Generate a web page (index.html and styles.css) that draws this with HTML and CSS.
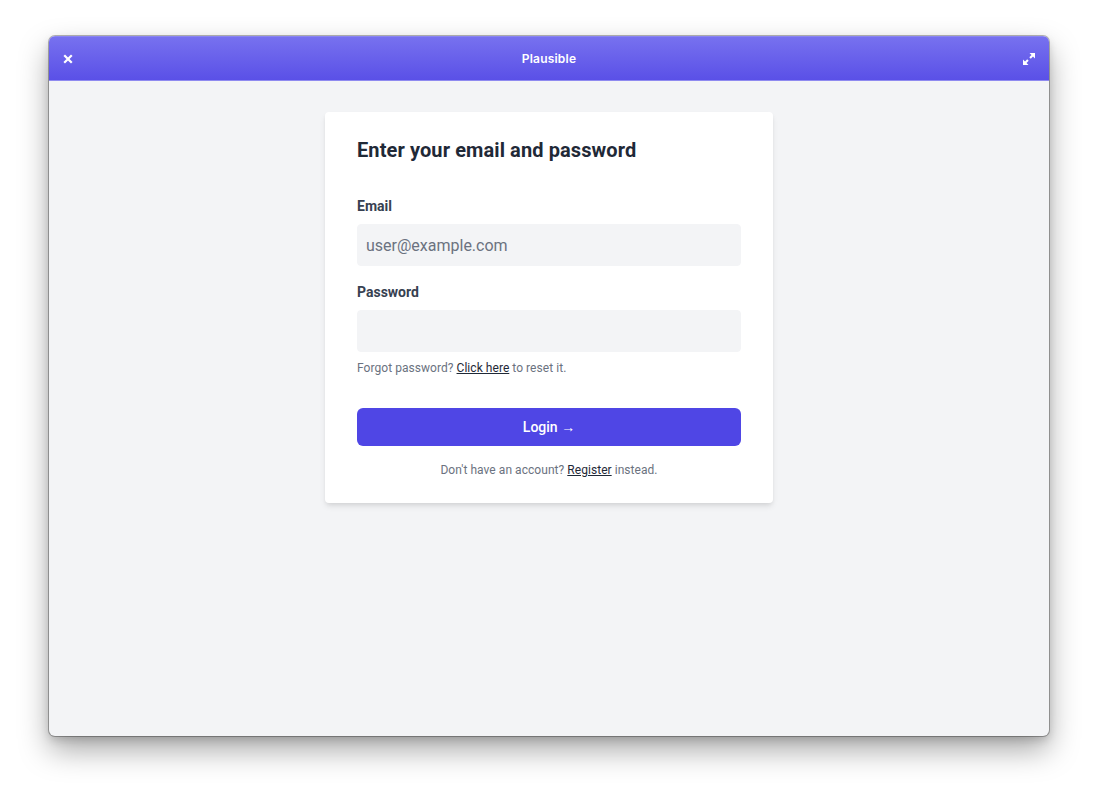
FILE: index.html
```html
<!DOCTYPE html>
<html lang="en">
<head>
<meta charset="utf-8">
<title>Plausible</title>
<link rel="stylesheet" href="styles.css">
</head>
<body>
<div class="desktop">
  <div class="window">
    <div class="titlebar">
      <button class="tb-btn close" aria-label="Close">
        <svg width="10" height="10" viewBox="0 0 10 10"><path d="M2 2 L8 8 M8 2 L2 8" stroke="#fff" stroke-width="2.2" stroke-linecap="square"/></svg>
      </button>
      <div class="tb-title">Plausible</div>
      <button class="tb-btn expand" aria-label="Maximize">
        <svg width="14" height="14" viewBox="0 0 14 14"><path d="M7.5 1 H13 V6.5 L11 4.5 L8.8 6.7 L7.3 5.2 L9.5 3 Z M1 7.5 V13 H6.5 L4.5 11 L6.7 8.8 L5.2 7.3 L3 9.5 Z" fill="#fff"/></svg>
      </button>
    </div>
    <div class="content">
      <form class="card">
        <h2 class="card-title">Enter your email and password</h2>
        <label class="label label-first" for="email">Email</label>
        <input class="input" id="email" type="email" placeholder="user@example.com">
        <label class="label" for="password">Password</label>
        <input class="input" id="password" type="password">
        <p class="hint">Forgot password? <a href="#">Click here</a> to reset it.</p>
        <button class="login" type="button">Login →</button>
        <p class="register">Don't have an account? <a href="#">Register</a> instead.</p>
      </form>
    </div>
  </div>
</div>
</body>
</html>
```

FILE: styles.css
```css
* { box-sizing: border-box; }
html, body { margin: 0; padding: 0; background: #ffffff; }
body { font-family: Roboto, "Liberation Sans", sans-serif; min-height: 100vh; }

.desktop {
  padding: 36px 0 62px 49px;
  min-height: 798px;
}

.window {
  width: 1000px;
  height: 700px;
  border-radius: 6px;
  overflow: hidden;
  display: flex;
  flex-direction: column;
  background: #f3f4f6;
  box-shadow: 0 0 0 1px rgba(0,0,0,0.28), 0 14px 30px rgba(0,0,0,0.34), 0 4px 8px rgba(0,0,0,0.15);
}

.titlebar {
  height: 45px;
  flex: none;
  display: flex;
  align-items: center;
  justify-content: space-between;
  padding: 0 12px 0 10px;
  background: linear-gradient(#7771ef, #5a50e7);
  border-top: 1px solid #8a85f2;
  border-bottom: 1px solid #8f8af0;
}

.tb-btn {
  border: 0;
  background: transparent;
  padding: 0;
  width: 18px;
  height: 18px;
  display: flex;
  align-items: center;
  justify-content: center;
}
.tb-btn.expand { width: 16px; height: 16px; }

.tb-title {
  color: #fff;
  font-family: Inter, "Noto Sans", sans-serif;
  font-size: 12px;
  font-weight: 600;
  letter-spacing: 0.2px;
}

.content {
  flex: 1;
  display: flex;
  justify-content: center;
  align-items: flex-start;
  padding-top: 31px;
}

.card {
  width: 448px;
  background: #fff;
  border-radius: 4px;
  padding: 24px 32px 25px;
  box-shadow: 0 4px 6px -1px rgba(0,0,0,0.1), 0 2px 4px -1px rgba(0,0,0,0.06);
  display: flex;
  flex-direction: column;
}

.card-title {
  margin: 0;
  font-size: 20px;
  line-height: 28px;
  font-weight: 700;
  letter-spacing: 0.1px;
  color: #1f2937;
}

.label {
  display: block;
  margin: 16px 0 8px;
  font-size: 14px;
  line-height: 20px;
  font-weight: 700;
  color: #374151;
}
.label-first { margin-top: 32px; }

.input {
  display: block;
  width: 100%;
  height: 42px;
  border: 1px solid #f3f4f6;
  background: #f3f4f6;
  border-radius: 4px;
  padding: 8px 8px;
  font-family: Roboto, sans-serif;
  font-size: 16px;
  line-height: 24px;
  color: #374151;
  outline: none;
}
.input::placeholder { color: #6b7280; }

.hint {
  margin: 8px 0 0;
  font-size: 12px;
  line-height: 16px;
  color: #6b7280;
  letter-spacing: 0.05px;
}
.hint a, .register a { color: #1f2937; text-decoration: underline; }

.login {
  margin-top: 32px;
  height: 38px;
  border: 0;
  border-radius: 6px;
  background: #4f46e5;
  color: #fff;
  font-family: Roboto, sans-serif;
  font-size: 14px;
  font-weight: 500;
}

.register {
  margin: 16px 0 0;
  text-align: center;
  font-size: 12px;
  line-height: 16px;
  color: #6b7280;
  letter-spacing: 0.05px;
}
```
